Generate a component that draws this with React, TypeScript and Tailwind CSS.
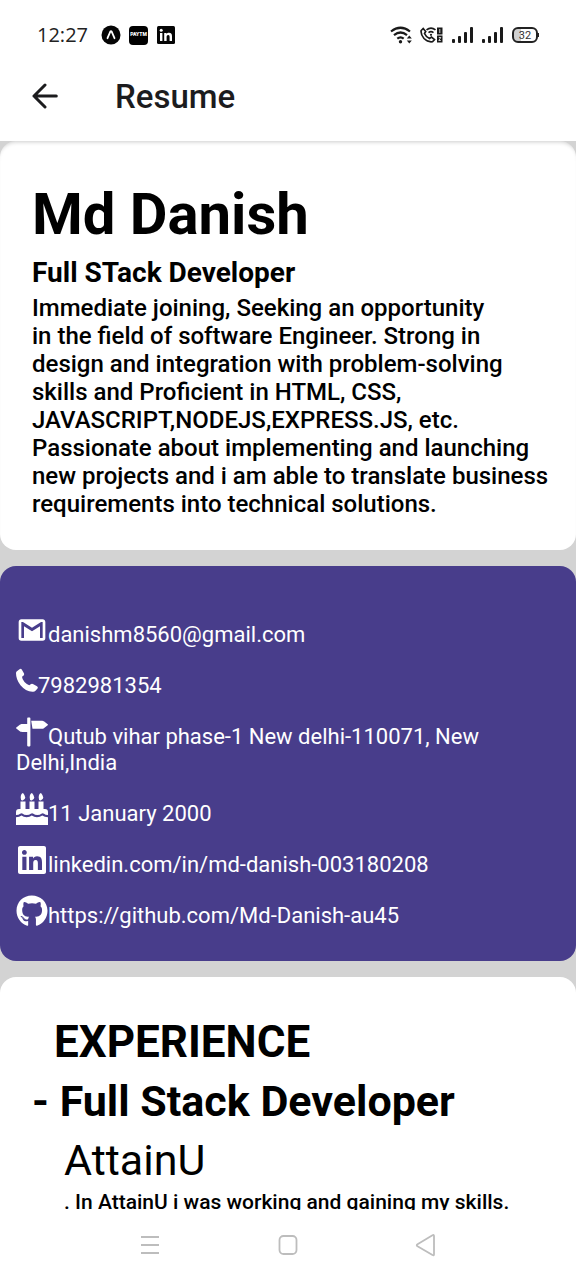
import React from "react";
import { FaLinkedin, FaGithub } from "react-icons/fa";

const LinkedInIcon = FaLinkedin;
const GitHubIcon = FaGithub;

function ExpoIcon() {
  return (
    <svg viewBox="0 0 20 20" className="size-5" aria-hidden="true">
      <circle cx="10" cy="10" r="9.5" fill="#050505" />
      <path d="M6.500 13.200 9.300 6.600Q10 5.600 10.700 6.600L13.500 13.200" fill="none" stroke="#fff" strokeWidth="1.800" strokeLinecap="round" />
    </svg>
  );
}

function StatusBar() {
  return (
    <div className="flex h-[70px] items-center justify-between px-[37px]">
      <div className="flex items-center">
        <span className="w-16 font-['Open_Sans'] text-xl text-[#222]">12:27</span>
        <ExpoIcon />
        <span className="ml-2 flex h-[19px] w-[19px] items-center justify-center rounded bg-black text-[5px] font-black text-white">PAYTM</span>
        <svg viewBox="0 0 20 20" className="ml-2 size-5" aria-hidden="true">
          <rect x="1" y="1" width="18" height="18" rx="1.500" fill="#050505" />
          <path d="M4 8h2.400v8H4zM8.200 8h2.300v1.100c.5-.8 1.300-1.300 2.500-1.300 2.300 0 3 1.400 3 3.600V16h-2.400v-4.100c0-1.200-.3-2-1.400-2s-1.600.8-1.600 2V16H8.200z" fill="#fff" />
          <circle cx="5.200" cy="5.300" r="1.500" fill="#fff" />
        </svg>
      </div>
      <div className="flex items-center text-[#1a1a1a]">
        <svg viewBox="0 0 24 18" className="h-[18px] w-6" fill="none" stroke="currentColor" strokeWidth="2.200" aria-hidden="true">
          <path d="M1 5.500Q10.500-2 20 5.500M4 9.200Q10.500 3.800 17 9.200M7.300 12.600Q10.500 10 13.700 12.600" />
          <circle cx="10.500" cy="15.800" r="1.700" fill="currentColor" stroke="none" />
          <path d="M16.800 12.500l2.500-3 2.500 3zM16.800 14.500l2.500 3 2.500-3z" fill="currentColor" stroke="none" />
        </svg>
        <svg viewBox="0 0 24 18" className="ml-[6px] h-[18px] w-6" fill="none" stroke="currentColor" strokeWidth="1.700" aria-hidden="true">
          <path d="M1.200 4.500 3.200 2.500 5.700 5.500 4.500 7.500Q6 11 9.500 12.500L11.500 11 14.500 13.500 12.500 15.700Q8 16.500 4 12.500.5 8.500 1.200 4.500Z" />
          <path d="M6.500 3.800Q11 .3 15.500 3.800M8.500 6.600Q11 4.800 13.500 6.600" />
          <circle cx="11" cy="8.800" r="1.100" fill="currentColor" stroke="none" />
          <path d="M17 1.500h5.500v7H17zM17 9.500h5.500v7H17z" fill="currentColor" stroke="none" />
          <path d="M19.800 3v4M18.800 11.500h2l-2 3h2" stroke="#fff" strokeWidth=".8" />
        </svg>
        {[0, 1].map((i) => (
          <svg key={i} viewBox="0 0 22 18" className="ml-2 h-[18px] w-[22px]" fill="currentColor" aria-hidden="true">
            <rect x="0" y="13" width="3" height="4" rx="1" />
            <rect x="6" y="10" width="3" height="7" rx="1" />
            <rect x="12" y="6" width="3" height="11" rx="1" />
            <rect x="18" y="1" width="3" height="16" rx="1" />
          </svg>
        ))}
        <span className="ml-2 flex h-4 w-[26px] items-center justify-center rounded-md border-2 border-[#222] bg-[linear-gradient(90deg,#d0d0d0_32%,#fff_32%)] text-[11px] leading-none text-[#333]">
          32
        </span>
        <span className="h-1 w-px bg-[#222]" />
      </div>
    </div>
  );
}

function Header() {
  return (
    <header className="flex h-[71px] items-start bg-white pl-8">
      <button type="button" aria-label="Go back" className="mt-[13px] mr-[57px] size-[26px] text-[#1c1c1e]">
        <svg viewBox="0 0 26 26" className="size-full" fill="none" stroke="currentColor" strokeWidth="3" strokeLinecap="round" strokeLinejoin="round" aria-hidden="true">
          <path d="M24.300 13H2M13 2 2 13 13 24" />
        </svg>
      </button>
      <h1 className="text-[33px] leading-[54px] font-medium text-[#1c1c1e]">Resume</h1>
    </header>
  );
}

const MailIcon = () => (
  <svg viewBox="0 0 24 24" className="inline size-8 align-[-4px]" fill="currentColor" aria-hidden="true">
    <path d="M20,18H18V9.250L12,13L6,9.250V18H4V6H5.200L12,10.250L18.800,6H20M20,4H4C2.890,4 2,4.900 2,6V18A2,2 0 0,0 4,20H20A2,2 0 0,0 22,18V6C22,4.890 21.100,4 20,4Z" />
  </svg>
);

const PhoneIcon = () => (
  <svg viewBox="0 0 22 32" className="inline h-8 w-[22px] align-[-4px]" fill="currentColor" aria-hidden="true">
    <path d="M.6 6.500 3.500 4.200Q5 3.300 5.900 4.700L7.900 8.300Q8.600 9.800 7.400 10.800L6 11.800Q6.200 14.500 8.500 17T13.300 20.200L14.700 19.200Q15.700 18.400 16.900 19L21 21.200Q22.400 22.200 21.500 23.500L19.500 25.800Q18.500 27 16.500 26.800 9.500 26.200 4.500 20.200 0 14.500 0 8.200 0 7 .6 6.500Z" />
  </svg>
);

const SignIcon = () => (
  <svg viewBox="0 0 20 20" className="inline size-8 align-[-4px]" fill="currentColor" aria-hidden="true">
    <path d="M19.799 5.165l-2.375-1.830a2 2 0 00-.521-.237A2 2 0 0016.336 3H9.500l.801 5h6.035c.164 0 .369-.037.566-.098s.387-.145.521-.236l2.375-1.832c.135-.091.202-.212.202-.334s-.067-.243-.201-.335zM8.500 1h-1a.5.5 0 00-.5.5V5H3.664c-.166 0-.37.037-.567.099-.198.060-.387.143-.521.236L.201 7.165C.066 7.256 0 7.378 0 7.500c0 .121.066.242.201.335l2.375 1.832c.134.091.323.175.521.235.197.061.401.098.567.098H7v8.500a.5.5 0 00.5.5h1a.5.5 0 00.5-.5v-17a.5.5 0 00-.5-.5z" />
  </svg>
);

const CakeIcon = () => (
  <svg viewBox="0 0 32 32" className="inline size-8 align-[-4px]" fill="currentColor" aria-hidden="true">
    <path d="M4.500 8.500h5V16h4V8.500h5V16h4V8.500h5V16H29q3 0 3 3v3q-2.700 0-4-1.200-1.300-1-2.600 0-1.400 1.200-4 1.200t-4-1.200q-1.300-1-2.600 0Q13.400 22 10.600 22t-3.800-1.200q-1.300-1-2.600 0Q2.700 22 0 22v-3q0-3 3-3h1.500z" />
    <path d="M0 24.300q3.500 0 5.500-1.800 2 1.800 5.100 1.800t5.200-1.800q2.200 1.800 5.200 1.800t5.300-1.800q2.200 1.800 5.700 1.800V32H0z" />
    <path d="M7 0q2.300 2.700 2.300 4.500T7 7.300 4.700 4.500 7 0zM16 0q2.300 2.700 2.300 4.500T16 7.300t-2.300-2.800T16 0zM25 0q2.300 2.700 2.300 4.500T25 7.300t-2.300-2.800T25 0z" />
  </svg>
);

const contacts = [
  { icon: <MailIcon />, text: "danishm8560@gmail.com", href: "mailto:danishm8560@gmail.com" },
  { icon: <PhoneIcon />, text: "7982981354", href: "tel:7982981354" },
  { icon: <SignIcon />, text: "Qutub vihar phase-1 New delhi-110071, New Delhi,India" },
  { icon: <CakeIcon />, text: "11 January 2000" },
  { icon: <LinkedInIcon className="inline h-8 w-8 align-[-4px]" />, text: "linkedin.com/in/md-danish-003180208", href: "https://linkedin.com/in/md-danish-003180208" },
  { icon: <GitHubIcon className="inline h-8 w-8 align-[-4px]" />, text: "https://github.com/Md-Danish-au45", href: "https://github.com/Md-Danish-au45" },
];

function NavBar() {
  return (
    <nav className="flex h-[70px] shrink-0 items-center justify-between bg-white px-[24%] text-[#bdbdbd]">
      <button type="button" aria-label="Recent apps" className="size-6">
        <svg viewBox="0 0 24 24" fill="none" stroke="currentColor" strokeWidth="1.800"><path d="M3 4h18M3 12h18M3 20h18" /></svg>
      </button>
      <button type="button" aria-label="Home" className="size-6">
        <svg viewBox="0 0 24 24" fill="none" stroke="currentColor" strokeWidth="1.800"><rect x="3.500" y="3" width="17" height="18" rx="4" /></svg>
      </button>
      <button type="button" aria-label="Back" className="size-6">
        <svg viewBox="0 0 24 24" fill="none" stroke="currentColor" strokeWidth="1.800" strokeLinejoin="round"><path d="M20 3v18.500Q20 22.800 18.500 22L3.500 13.200Q2 12.200 3.500 11.200L18.500 2.200Q20 1.500 20 3Z" /></svg>
      </button>
    </nav>
  );
}

export default function App() {
  return (
    <div className="flex h-screen flex-col overflow-hidden bg-white font-[Roboto,sans-serif] text-black">
      <StatusBar />
      <Header />
      <main className="flex min-h-0 flex-1 flex-col gap-4 overflow-hidden bg-[#d3d3d3]">
        <section className="shrink-0 rounded-2xl bg-white pt-10 pr-6 pb-8 pl-8 shadow-[inset_0_4px_4px_-3px_#0003]">
          <h2 className="text-[58px] leading-[66px] font-bold">Md Danish</h2>
          <h3 className="mt-2 text-[28px] leading-[35px] font-bold">Full STack Developer</h3>
          <p className="mt-1 text-2xl leading-7 font-medium">
            Immediate joining, Seeking an opportunity
            <br />
            in the field of software Engineer. Strong in design and integration with problem-solving skills and Proficient in HTML, CSS, JAVASCRIPT,NODEJS,EXPRESS.JS, etc. Passionate about implementing and launching new projects and i am able to translate business requirements into technical solutions.
          </p>
        </section>
        <section className="shrink-0 rounded-2xl bg-[#483d8b] px-4 pt-12 pb-8 text-[22px] text-white">
          <ul className="flex flex-col gap-[17px]">
            {contacts.map(({ icon, text, href }) => (
              <li key={text} className="leading-[26px]">
                {icon}
                {href ? <a href={href}>{text}</a> : text}
              </li>
            ))}
          </ul>
        </section>
        <section className="flex-1 shrink-0 rounded-t-2xl bg-white px-8 pt-9">
          <h2 className="pl-[22px] text-[44px] leading-[59px] font-bold">EXPERIENCE</h2>
          <h3 className="text-[43px] leading-[59px] font-bold">- Full Stack Developer</h3>
          <p className="pl-8 text-[43px] leading-[59px]">AttainU</p>
          <p className="pl-8 text-[21px] leading-6 font-medium">. In AttainU i was working and gaining my skills.</p>
        </section>
      </main>
      <NavBar />
    </div>
  );
}
